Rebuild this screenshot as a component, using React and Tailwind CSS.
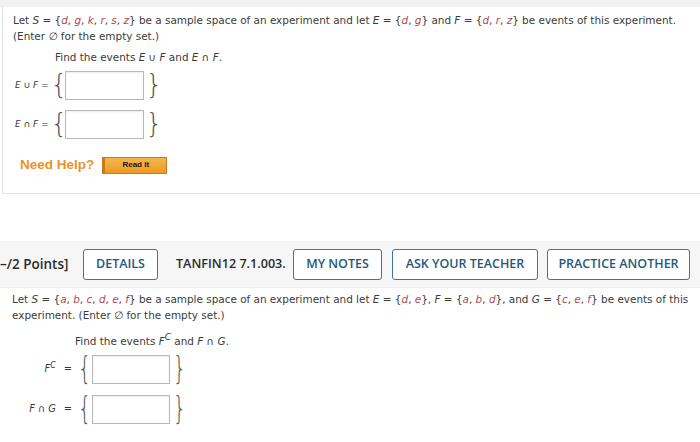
import React from "react";

const R = ({ children }) => (
  <i className="text-[#b5484e]">{children}</i>
);
const I = ({ children }) => <i>{children}</i>;

function Set({ items }) {
  return (
    <span>
      {"{"}
      {items.map((x, i) => (
        <React.Fragment key={i}>
          <R>{x}</R>
          {i < items.length - 1 ? ", " : ""}
        </React.Fragment>
      ))}
      {"}"}
    </span>
  );
}

function Box({ w = 79, h = 29 }) {
  return (
    <div
      className="shrink-0 border border-[#b8b8b8] bg-white shadow-[inset_0_1px_2px_rgba(0,0,0,0.08)]"
      style={{ width: w, height: h }}
    />
  );
}

function Btn({ children, w }) {
  return (
    <div
      className="h-[31px] flex items-center justify-center border-[1.5px] border-[#3f7596] rounded-[3px] bg-white text-[#22597b] text-[12.5px] font-semibold"
      style={{ width: w }}
    >
      {children}
    </div>
  );
}

function SmallBr({ c }) {
  return (
    <span className="w-[8px] shrink-0 flex justify-center text-[26px] font-light leading-none text-[#555] -mt-[3px]">
      {c}
    </span>
  );
}

function BigBr({ c }) {
  return (
    <span className="w-[7px] shrink-0 flex justify-center text-[32px] font-extralight leading-none text-[#555] -mt-[4px] scale-x-[0.65]">
      {c}
    </span>
  );
}

export default function App() {
  return (
    <div className="w-[700px] h-[442px] bg-white overflow-hidden text-[#3a3a3a] font-['DejaVu_Sans',Verdana,sans-serif] text-[10.45px]">
      <div className="h-[7px] bg-[#f1f1f1]" />
      <div className="ml-[2px] h-[187px] border-l border-b border-[#e2e2e2] pl-[10px] pt-[5px]">
        <div className="leading-[16px]">
          Let <I>S</I> = <Set items={["d", "g", "k", "r", "s", "z"]} /> be a sample space of an experiment and let <I>E</I> = <Set items={["d", "g"]} /> and <I>F</I> = <Set items={["d", "r", "z"]} /> be events of this experiment.
        </div>
        <div className="leading-[16px]">(Enter ∅ for the empty set.)</div>
        <div className="mt-[5px] ml-[42px] leading-[16px]">
          Find the events <I>E</I> ∪ <I>F</I> and <I>E</I> ∩ <I>F</I>.
        </div>
        <div className="mt-[6px] flex items-center h-[29px]">
          <div className="w-[37px] shrink-0 text-[9px] ml-[2px] whitespace-nowrap">
            <I>E</I> ∪ <I>F</I> =
          </div>
          <span className="ml-[3px]"></span>
          <SmallBr c="{" />
          <span className="ml-[2px]"></span>
          <Box w={79} h={29} />
          <span className="ml-[6px]"></span>
          <SmallBr c="}" />
        </div>
        <div className="mt-[10px] flex items-center h-[29px]">
          <div className="w-[37px] shrink-0 text-[9px] ml-[2px] whitespace-nowrap">
            <I>E</I> ∩ <I>F</I> =
          </div>
          <span className="ml-[3px]"></span>
          <SmallBr c="{" />
          <span className="ml-[2px]"></span>
          <Box w={79} h={29} />
          <span className="ml-[6px]"></span>
          <SmallBr c="}" />
        </div>
        <div className="mt-[16px] ml-[7px] flex items-center gap-[8px]">
          <span className="font-['Liberation_Sans',Arial,sans-serif] font-bold text-[13.5px] text-[#e9922b]">
            Need Help?
          </span>
          <div className="w-[65px] h-[17px] flex items-center justify-center bg-gradient-to-b from-[#f6b64a] to-[#ec9a23] border border-[#c77a17] border-l-[3px] font-['Liberation_Sans',Arial,sans-serif] font-bold text-[8px] text-[#1a1a1a]">
            Read It
          </div>
        </div>
      </div>
      <div className="h-[47px]" />
      <div className="h-[47px] bg-[#f6f6f6] border-b border-[#ececec] flex items-center font-['Open_Sans',sans-serif] whitespace-nowrap">
        <span className="w-[83px] shrink-0 text-[13.5px] font-semibold text-[#2b2b2b]">–/2 Points]</span>
        <Btn w={75}>DETAILS</Btn>
        <span className="ml-[18px] w-[117px] shrink-0 text-[12.6px] font-semibold text-[#2b2b2b]">TANFIN12 7.1.003.</span>
        <Btn w={89}>MY NOTES</Btn>
        <div className="ml-[10px]">
          <Btn w={146}>ASK YOUR TEACHER</Btn>
        </div>
        <div className="ml-[9px]">
          <Btn w={143}>PRACTICE ANOTHER</Btn>
        </div>
      </div>
      <div className="pl-[12px] pt-[3px]">
        <div className="leading-[16px]">
          Let <I>S</I> = <Set items={["a", "b", "c", "d", "e", "f"]} /> be a sample space of an experiment and let <I>E</I> = <Set items={["d", "e"]} />, <I>F</I> = <Set items={["a", "b", "d"]} />, and <I>G</I> = <Set items={["c", "e", "f"]} /> be events of this experiment. (Enter ∅ for the empty set.)
        </div>
        <div className="mt-[10px] ml-[63px] leading-[16px]">
          Find the events <I>F</I>
          <sup className="text-[9px] -top-[5px] relative align-baseline"><I>C</I></sup> and <I>F</I> ∩ <I>G</I>.
        </div>
        <div className="mt-[4px] flex items-center h-[33px]">
          <div className="w-[60px] shrink-0 text-[9.8px] flex justify-end gap-[8px] whitespace-nowrap">
            <span>
              <I>F</I>
              <sup className="text-[8px] relative -top-[4px] align-baseline"><I>C</I></sup>
            </span>
            <span>=</span>
          </div>
          <span className="ml-[9px]"></span>
          <BigBr c="{" />
          <span className="ml-[4px]"></span>
          <Box w={78} h={29} />
          <span className="ml-[6px]"></span>
          <BigBr c="}" />
        </div>
        <div className="mt-[7px] flex items-center h-[33px]">
          <div className="w-[60px] shrink-0 text-[9.8px] flex justify-end gap-[8px] whitespace-nowrap">
            <span>
              <I>F</I> ∩ <I>G</I>
            </span>
            <span>=</span>
          </div>
          <span className="ml-[9px]"></span>
          <BigBr c="{" />
          <span className="ml-[4px]"></span>
          <Box w={78} h={29} />
          <span className="ml-[6px]"></span>
          <BigBr c="}" />
        </div>
      </div>
    </div>
  );
}
